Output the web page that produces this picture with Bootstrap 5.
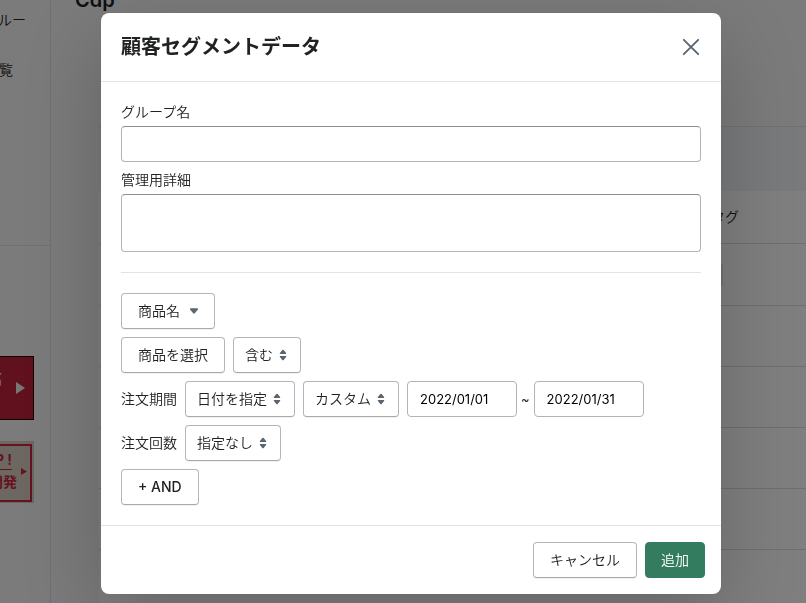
<!DOCTYPE html>
<html lang="ja">
<head>
<meta charset="utf-8">
<meta name="viewport" content="width=device-width, initial-scale=1">
<title>顧客セグメントデータ</title>
<link href="https://cdn.jsdelivr.net/npm/bootstrap@5.3.0/dist/css/bootstrap.min.css" rel="stylesheet">
<style>
  body { font-family: Inter, "Noto Sans CJK JP", sans-serif; font-size: 14px; line-height: 20px; color: #202223; background: #f6f7f9; overflow: hidden; }

  /* Page behind the dialog */
  .side-menu { width: 51px; border-right: 1px solid #e1e3e5; }
  .side-links { height: 246px; border-bottom: 1px solid #e1e3e5; padding-top: 10px; gap: 30px; }
  .side-links a { color: #202223; font-weight: 350; }
  .side-links .link-top { padding-right: 24px; }
  .side-links .link-list { padding-right: 37px; }
  .promo-red { width: 34px; height: 64px; margin-top: 110px; background: #c2203a; border: 1px solid #200; border-left: 0; color: #f6e3d0; padding: 12px 8px 0 0; }
  .promo-red .promo-text { width: 2px; direction: rtl; font-weight: 700; white-space: nowrap; }
  .promo-red svg { margin-top: 13px; }
  .promo-line { width: 34px; height: 62px; margin-top: 21px; background: #d9cfc2; padding: 3px 2px 1px 0; color: #cf2440; font-weight: 700; }
  .promo-line .promo-frame { height: 58px; border: 2px solid #cf2440; border-left: 0; padding: 0 3px 4px 0; }
  .promo-line .promo-text { width: 17px; line-height: 22px; }
  .promo-line u { text-underline-offset: 4px; padding-right: 5px; }
  .page-title { height: 127px; font-size: 20px; line-height: 28px; font-weight: 600; padding-left: 24px; }
  .page-title span { margin-top: -14px; }
  .page-panel { margin-left: 48px; margin-top: -1px; border-top: 1px solid #dfe1e4; }
  .page-filter { height: 64px; background: #f1f4f8; }
  .page-list { background: #fff; }
  .page-list .list-line { height: 61px; border-bottom: 1px solid #dcdddf; }
  .page-list .list-head { height: 53px; padding-right: 67px; font-weight: 350; }
  .page-list .list-tags { height: 62px; }
  .page-list .tag-pill { width: 24px; height: 24px; margin-right: 83px; background: #e4e5e7; border-radius: 4px; }
  .modal-backdrop { --bs-backdrop-opacity: .5; }

  /* Dialog */
  .modal { padding-left: 16px; }
  .modal-dialog { max-width: 620px; margin-top: 13px; }
  .modal-content { border: 0; border-radius: 8px; box-shadow: 0 26px 80px rgba(0,0,0,.2), 0 0 1px rgba(0,0,0,.2); color: #202223; }
  .modal-header { padding: 20px; border-color: #e1e3e5; }
  .modal-title { font-size: 20px; line-height: 28px; font-weight: 600; }
  .close-button { width: 20px; height: 20px; }
  .modal-body { padding: 20px; font-weight: 350; }
  .modal-footer { padding: 16px; border-color: #e1e3e5; }
  .form-label { margin-bottom: 4px; }
  .form-control, .form-select, .outline-button, .save-button { font-size: 14px; line-height: 20px; font-weight: 350; border: 1px solid #aeb4b9; border-radius: 4px; min-height: 36px; color: #202223; }
  .form-control { padding: 7px 12px; border-top-color: #898f94; }
  textarea.form-control { height: 58px; resize: none; }
  .form-select { padding: 7px 27px 7px 11px; background: #fff url("data:image/svg+xml,%3Csvg xmlns='http://www.w3.org/2000/svg' viewBox='0 0 8 12'%3E%3Cpath fill='%235c6670' d='M3.3 1.1Q4 .4 4.7 1.1L7.1 3.9Q7.7 5 6.6 5H1.4Q.3 5 .9 3.9ZM3.3 10.9Q4 11.6 4.7 10.9L7.1 8.1Q7.7 7 6.6 7H1.4Q.3 7 .9 8.1Z'/%3E%3C/svg%3E") no-repeat right 13px center / 8px 12px; }
  .form-select, .outline-button { border-color: #b2b6ba; border-bottom-color: #a5aaaf; box-shadow: 0 1px 0 rgba(0,0,0,.05); }
  .outline-button { background: #fff; padding: 7px 16px; }
  .menu-button { padding-right: 14px; }
  .and-button { font-weight: 500; }
  .form-control.date-box { width: 110px; font-size: 13px; font-weight: 400; color: #000; border-color: #aeb4b9; }
  .date-range { gap: 4px; font-weight: 400; font-size: 13px; }
  .save-button { background: #347c60; border-color: #347c60; color: #fff; padding: 7px 15px; }
  .rule-line { margin: 20px 0; border-top: 1px solid #e1e3e5; opacity: 1; }
</style>
<script src="https://cdn.jsdelivr.net/npm/bootstrap@5.3.0/dist/js/bootstrap.bundle.min.js"></script>
</head>
<body>
<div class="d-flex min-vh-100 overflow-hidden">
  <nav class="side-menu flex-shrink-0 overflow-hidden">
    <div class="side-links d-flex flex-column">
      <a href="#" class="link-top d-flex justify-content-end text-nowrap text-decoration-none">ルー</a>
      <a href="#" class="link-list d-flex justify-content-end text-nowrap text-decoration-none">覧</a>
    </div>
    <div class="promo-red d-flex justify-content-between">
      <span class="promo-text overflow-hidden">高</span>
      <svg width="9" height="12" viewBox="0 0 9 12" fill="#f3eee8"><path d="M0 0 9 6 0 12Z"/></svg>
    </div>
    <div class="promo-line">
      <div class="promo-frame d-flex justify-content-between align-items-center">
        <div class="promo-text d-flex flex-column align-items-end text-nowrap"><u>P !</u><span>開発</span></div>
        <svg width="6" height="7" viewBox="0 0 6 7" fill="#cf2440"><path d="M0 0 6 3.5 0 7Z"/></svg>
      </div>
    </div>
  </nav>
  <main class="flex-grow-1">
    <div class="page-title d-flex align-items-start"><span>Cdp</span></div>
    <div class="page-panel">
      <div class="page-filter"></div>
      <div class="page-list">
        <div class="list-line list-head d-flex align-items-center justify-content-end">タグ</div>
        <div class="list-line list-tags d-flex align-items-center justify-content-end"><span class="tag-pill"></span></div>
        <div class="list-line"></div>
        <div class="list-line"></div>
        <div class="list-line"></div>
        <div class="list-line"></div>
        <div class="list-line border-0"></div>
      </div>
    </div>
  </main>
</div>

<div class="modal-backdrop show"></div>
<div class="modal d-block overflow-hidden" role="dialog" aria-modal="true" aria-labelledby="dialog-title">
  <div class="modal-dialog mb-0">
    <form class="modal-content">
      <div class="modal-header">
        <h1 class="modal-title" id="dialog-title">顧客セグメントデータ</h1>
        <button type="button" class="close-button btn p-0 border-0 d-flex" aria-label="閉じる">
          <svg width="20" height="20" viewBox="0 0 20 20" fill="none" stroke="#5c6670" stroke-width="1.9" stroke-linecap="round"><path d="M2.8 2.8 17.2 17.2M17.2 2.8 2.8 17.2"/></svg>
        </button>
      </div>
      <div class="modal-body">
        <div class="mb-2">
          <label for="group-name" class="form-label d-block">グループ名</label>
          <input id="group-name" type="text" class="form-control">
        </div>
        <div>
          <label for="group-note" class="form-label d-block">管理用詳細</label>
          <textarea id="group-note" class="form-control d-block"></textarea>
        </div>
        <hr class="rule-line">
        <div class="d-flex flex-column gap-2">
          <div class="d-flex">
            <button type="button" class="outline-button menu-button d-flex align-items-center">商品名
              <svg class="ms-2" width="12" height="8" viewBox="0 0 12 8" fill="#5c6670"><path d="M2.7 1.2H9.3Q10.8 1.4 9.9 2.6L6.8 6.3Q6 7.1 5.2 6.3L2.1 2.6Q1.2 1.4 2.7 1.2Z"/></svg>
            </button>
          </div>
          <div class="d-flex gap-2">
            <button type="button" class="outline-button">商品を選択</button>
            <select class="form-select w-auto" aria-label="商品の条件"><option>含む</option></select>
          </div>
          <div class="d-flex align-items-center gap-2">
            <label for="period-kind">注文期間</label>
            <select id="period-kind" class="form-select w-auto"><option>日付を指定</option></select>
            <select class="form-select w-auto" aria-label="期間"><option>カスタム</option></select>
            <div class="date-range d-flex align-items-center">
              <input type="text" class="date-box form-control" value="2022/01/01" aria-label="開始日">
              <span>~</span>
              <input type="text" class="date-box form-control" value="2022/01/31" aria-label="終了日">
            </div>
          </div>
          <div class="d-flex align-items-center gap-2">
            <label for="order-count">注文回数</label>
            <select id="order-count" class="form-select w-auto"><option>指定なし</option></select>
          </div>
          <div class="d-flex">
            <button type="button" class="outline-button and-button">+ AND</button>
          </div>
        </div>
      </div>
      <div class="modal-footer gap-2">
        <button type="button" class="outline-button m-0">キャンセル</button>
        <button type="submit" class="save-button m-0">追加</button>
      </div>
    </form>
  </div>
</div>
</body>
</html>
